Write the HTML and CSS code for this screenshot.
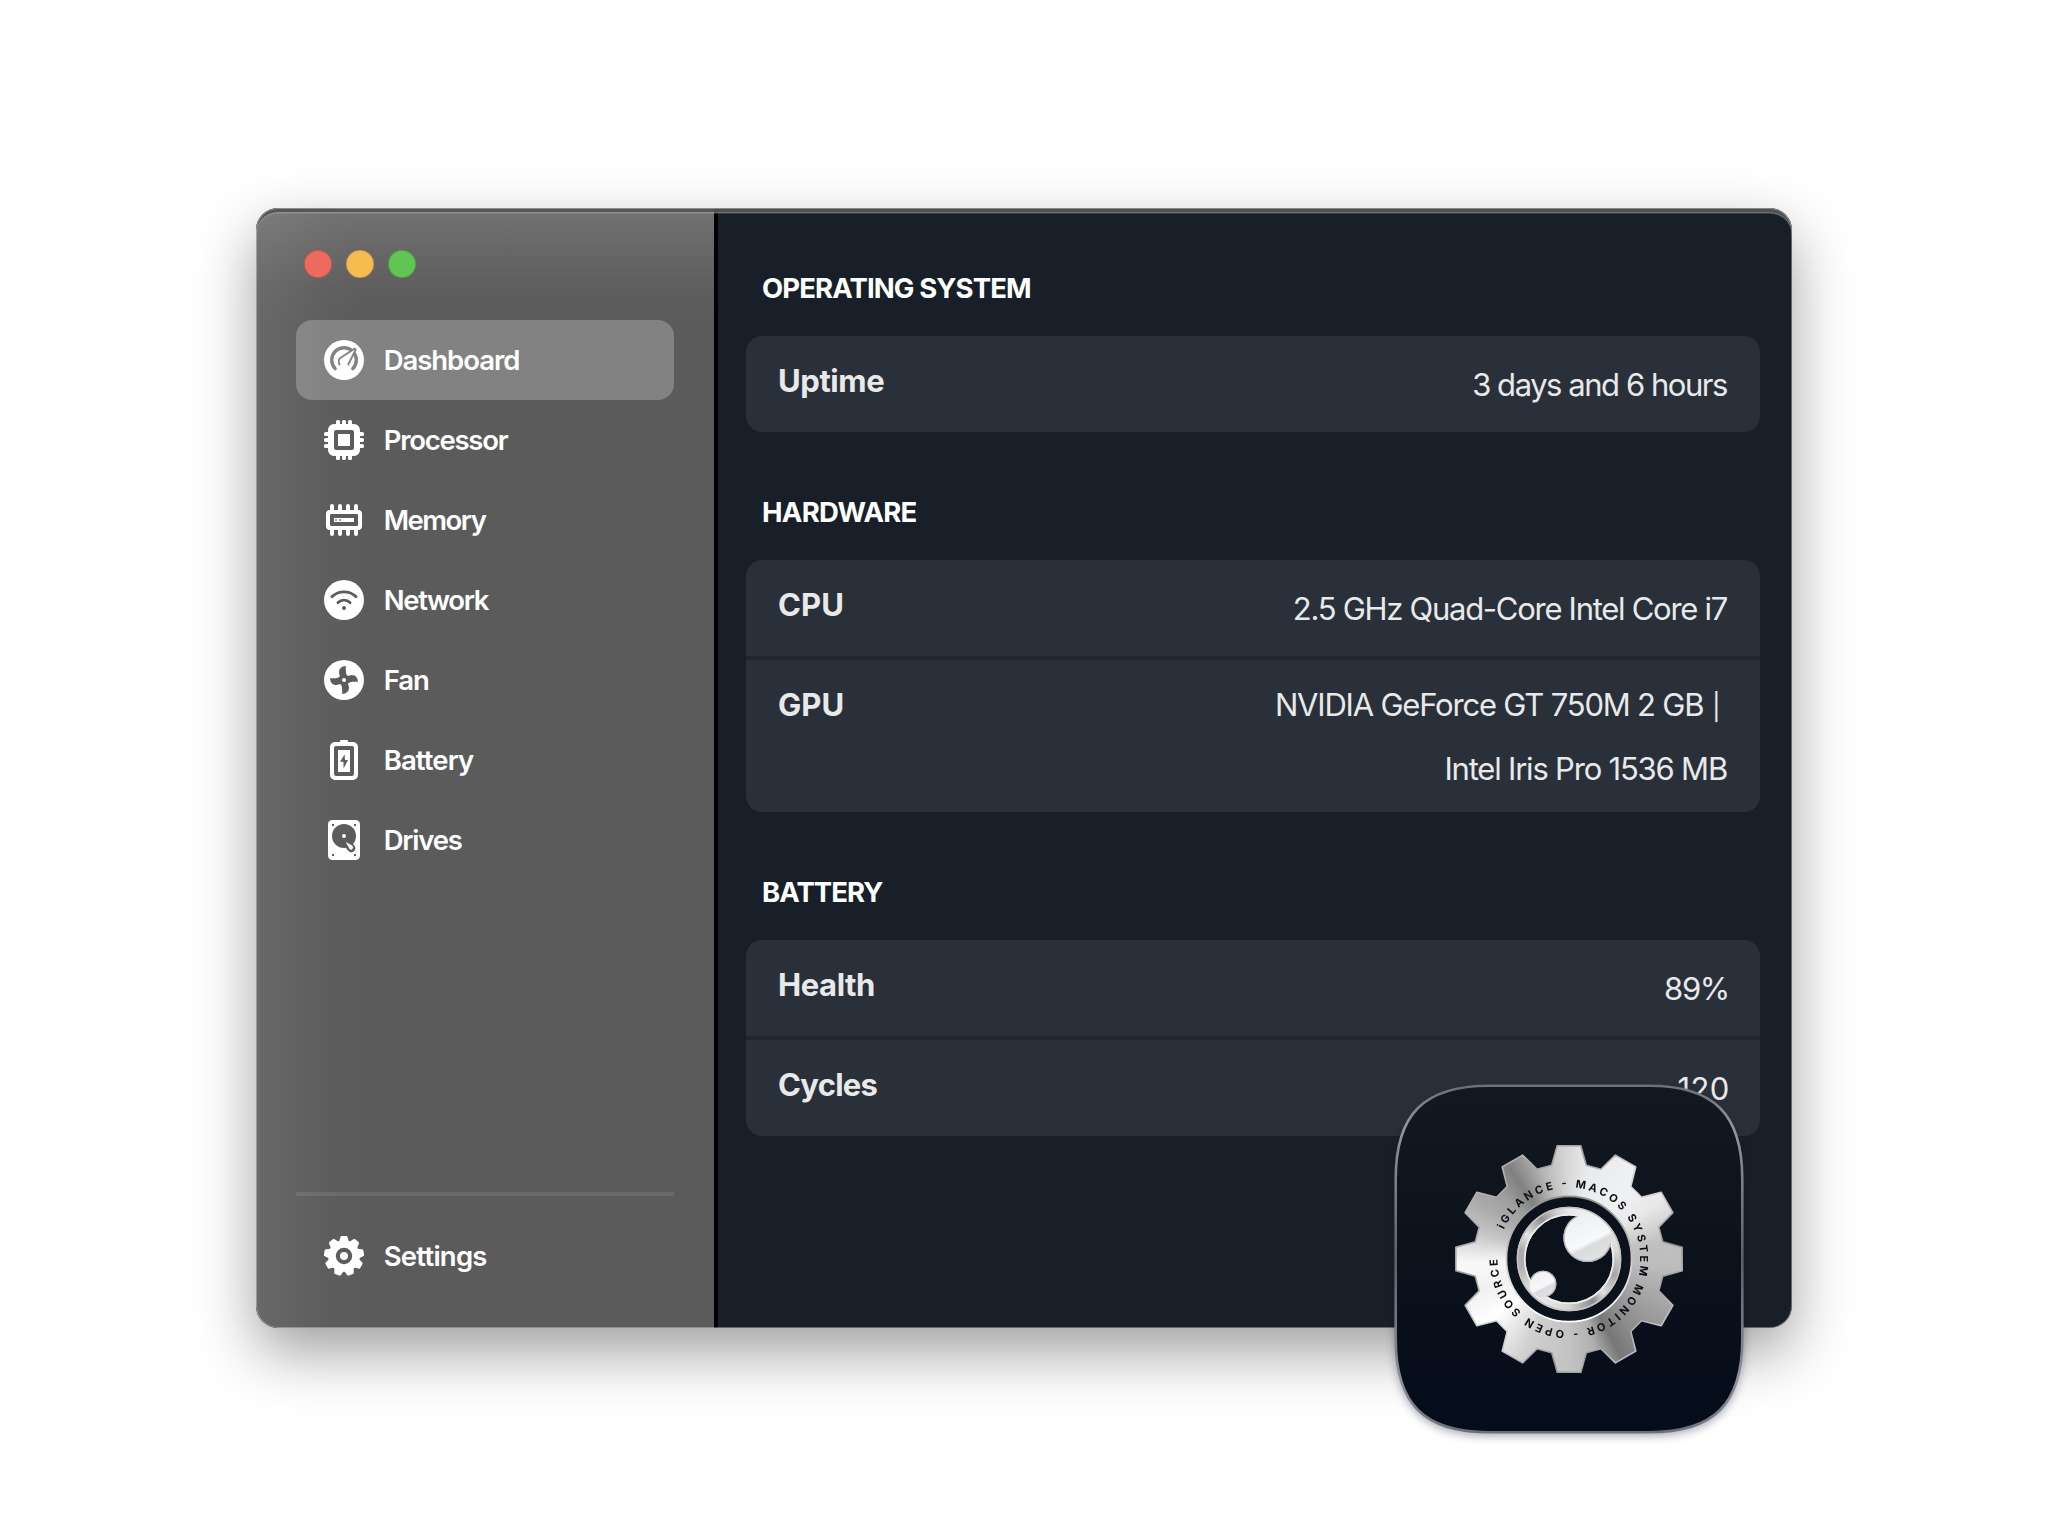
FILE: index.html
```html
<!DOCTYPE html>
<html lang="en">
<head>
<meta charset="utf-8">
<title>iGlance</title>
<link rel="stylesheet" href="styles.css">
</head>
<body>
<main class="stage">
  <div class="window">
    <aside class="sidebar">
      <div class="lights">
        <span class="light light-close"></span>
        <span class="light light-minimize"></span>
        <span class="light light-zoom"></span>
      </div>
      <nav class="nav">
        <a class="nav-item nav-item-active">
          <svg class="icon" viewBox="0 0 20 20">
            <mask id="m-dash">
              <circle cx="10" cy="10" r="10" fill="#fff"/>
              <path d="M5.600 14.300A6.150 6.150 0 1 1 14.400 14.300" fill="none" stroke="#000" stroke-width="1.700" stroke-linecap="round"/>
              <path d="M15.300 4.900L12 11.400A2.150 2.150 0 1 1 8.200 9.500Z" fill="#000" stroke="#000" stroke-width="1.900" stroke-linejoin="round"/>
              <path d="M15.300 4.900L12 11.400A2.150 2.150 0 1 1 8.200 9.500Z" fill="#fff"/>
              <path d="M8.300 12h3.400l1.500 4H6.800z" fill="#fff"/>
            </mask>
            <rect width="20" height="20" fill="#fff" mask="url(#m-dash)"/>
          </svg>
          <span class="nav-label label-dashboard">Dashboard</span>
        </a>
        <a class="nav-item">
          <svg class="icon" viewBox="0 0 20 20" fill="#fff">
            <path fill-rule="evenodd" d="M5 2h10a3 3 0 0 1 3 3v10a3 3 0 0 1-3 3H5a3 3 0 0 1-3-3V5a3 3 0 0 1 3-3zM6 5a1 1 0 0 0-1 1v8a1 1 0 0 0 1 1h8a1 1 0 0 0 1-1V6a1 1 0 0 0-1-1z"/>
            <rect x="7" y="7" width="6" height="6"/>
            <g>
              <rect x="6" y="0" width="2" height="20" rx=".8" clip-path="url(#pins-v)"/>
              <rect x="9" y="0" width="2" height="20" rx=".8" clip-path="url(#pins-v)"/>
              <rect x="12" y="0" width="2" height="20" rx=".8" clip-path="url(#pins-v)"/>
              <rect x="0" y="6" width="20" height="2" rx=".8" clip-path="url(#pins-h)"/>
              <rect x="0" y="9" width="20" height="2" rx=".8" clip-path="url(#pins-h)"/>
              <rect x="0" y="12" width="20" height="2" rx=".8" clip-path="url(#pins-h)"/>
            </g>
            <clipPath id="pins-v"><path d="M0 0h20v3H0zM0 17h20v3H0z"/></clipPath>
            <clipPath id="pins-h"><path d="M0 0h3v20H0zM17 0h3v20h-3z"/></clipPath>
          </svg>
          <span class="nav-label label-processor">Processor</span>
        </a>
        <a class="nav-item">
          <svg class="icon" viewBox="0 0 20 20" fill="#fff">
            <path fill-rule="evenodd" d="M3 5h14a2 2 0 0 1 2 2v6a2 2 0 0 1-2 2H3a2 2 0 0 1-2-2V7a2 2 0 0 1 2-2zM3.600 7a.6.6 0 0 0-.6.6v4.800a.6.6 0 0 0 .6.6h12.800a.6.6 0 0 0 .6-.6V7.600a.6.6 0 0 0-.6-.6z"/>
            <path fill-rule="evenodd" d="M5 9h10v2H5zM5.600 9.600v.8h.8v-.8zM7.600 9.600v.8h.8v-.8z"/>
            <path d="M4 3v3M8 3v3M12 3v3M16 3v3M4 14v3M8 14v3M12 14v3M16 14v3" stroke="#fff" stroke-width="2" stroke-linecap="round"/>
          </svg>
          <span class="nav-label label-memory">Memory</span>
        </a>
        <a class="nav-item">
          <svg class="icon" viewBox="0 0 20 20">
            <mask id="m-net">
              <circle cx="10" cy="10" r="10" fill="#fff"/>
              <path d="M4 8.300A8.800 8.800 0 0 1 16 8.300M7 11.300A4.200 4.200 0 0 1 13 11.300" fill="none" stroke="#000" stroke-width="1.450" stroke-linecap="round"/>
              <circle cx="10" cy="14" r="1" fill="#000"/>
            </mask>
            <rect width="20" height="20" fill="#fff" mask="url(#m-net)"/>
          </svg>
          <span class="nav-label label-network">Network</span>
        </a>
        <a class="nav-item">
          <svg class="icon" viewBox="0 0 20 20">
            <mask id="m-fan">
              <circle cx="10" cy="10" r="10" fill="#fff"/>
              <g fill="#000">
                <path id="blade" d="M10.900 3C8.900 3.100 7.500 4.200 7.500 6.200C7.500 7.800 8.600 8.900 10 10.400L12 9.500C11 7.400 10.800 5.500 10.900 3z"/>
                <use href="#blade" transform="rotate(90 10 10)"/>
                <use href="#blade" transform="rotate(180 10 10)"/>
                <use href="#blade" transform="rotate(270 10 10)"/>
                <circle cx="10" cy="10" r="2.900"/>
              </g>
              <circle cx="10" cy="10" r="1" fill="#fff"/>
            </mask>
            <rect width="20" height="20" fill="#fff" mask="url(#m-fan)"/>
          </svg>
          <span class="nav-label label-fan">Fan</span>
        </a>
        <a class="nav-item">
          <svg class="icon" viewBox="0 0 20 20" fill="#fff">
            <path fill-rule="evenodd" d="M8.600 0h2.800a.6.6 0 0 1 .6.6V1h2.500A2.500 2.500 0 0 1 17 3.500v14a2.500 2.500 0 0 1-2.500 2.500h-9A2.500 2.500 0 0 1 3 17.500v-14A2.500 2.500 0 0 1 5.500 1H8V.6a.6.6 0 0 1 .6-.6zM6 3a1 1 0 0 0-1 1v13a1 1 0 0 0 1 1h8a1 1 0 0 0 1-1V4a1 1 0 0 0-1-1z"/>
            <path fill-rule="evenodd" d="M7 5h6v11H7zM10.300 7.200L8 10.900h1.700l.1 3.300L12 10h-1.500z"/>
          </svg>
          <span class="nav-label label-battery">Battery</span>
        </a>
        <a class="nav-item">
          <svg class="icon" viewBox="0 0 20 20">
            <mask id="m-drive">
              <rect x="2" width="16" height="20" rx="2.200" fill="#fff"/>
              <circle cx="10" cy="8" r="6" fill="#000"/>
              <path d="M12 12L13.600 14.100" stroke="#000" stroke-width="4" stroke-linecap="round"/>
              <circle cx="10" cy="8" r="1" fill="#fff"/>
              <path d="M11.200 11.300L14 12.900A.95.95 0 0 1 12.900 14.500z" fill="#fff" stroke="#fff" stroke-width=".3" stroke-linejoin="round"/>
              <path d="M4 2h1v1H4zM15 2h1v1h-1zM4 17h1v1H4zM15 17h1v1h-1z" fill="#000"/>
            </mask>
            <rect width="20" height="20" fill="#fff" mask="url(#m-drive)"/>
          </svg>
          <span class="nav-label label-drives">Drives</span>
        </a>
      </nav>
      <div class="sidebar-footer">
        <a class="nav-item">
          <svg class="icon" viewBox="0 0 20 20">
            <mask id="m-gear">
              <g fill="#fff">
                <circle cx="10" cy="10" r="7.900"/>
                <path id="cog" d="M7.500 3L8.200.6Q8.300 0 8.900 0h2.200Q11.700 0 11.800.6L12.500 3z"/>
                <use href="#cog" transform="rotate(40 10 10)"/>
                <use href="#cog" transform="rotate(80 10 10)"/>
                <use href="#cog" transform="rotate(120 10 10)"/>
                <use href="#cog" transform="rotate(160 10 10)"/>
                <use href="#cog" transform="rotate(200 10 10)"/>
                <use href="#cog" transform="rotate(240 10 10)"/>
                <use href="#cog" transform="rotate(280 10 10)"/>
                <use href="#cog" transform="rotate(320 10 10)"/>
              </g>
              <circle cx="10" cy="10" r="3.050" fill="none" stroke="#000" stroke-width="2.100"/>
            </mask>
            <rect width="20" height="20" fill="#fff" mask="url(#m-gear)"/>
          </svg>
          <span class="nav-label label-settings">Settings</span>
        </a>
      </div>
    </aside>
    <section class="content">
      <h2 class="heading heading-os">OPERATING SYSTEM</h2>
      <div class="card">
        <div class="row"><span class="label">Uptime</span><span class="value value-uptime">3 days and 6 hours</span></div>
      </div>
      <h2 class="heading">HARDWARE</h2>
      <div class="card">
        <div class="row"><span class="label label-wide">CPU</span><span class="value">2.5 GHz Quad-Core Intel Core i7</span></div>
        <div class="row"><span class="label label-wide">GPU</span><span class="value value-multi">NVIDIA GeForce GT 750M 2 GB <span class="bar">|</span>&nbsp;<br>Intel Iris Pro 1536 MB</span></div>
      </div>
      <h2 class="heading heading-battery">BATTERY</h2>
      <div class="card">
        <div class="row"><span class="label">Health</span><span class="value value-percent">89%</span></div>
        <div class="row"><span class="label label-tight">Cycles</span><span class="value value-count">120</span></div>
      </div>
    </section>
  </div>

  <svg class="app-icon" viewBox="-180 -180 360 360">
    <defs>
      <linearGradient id="body" x1="0" y1="0" x2="0" y2="1">
        <stop offset="0" stop-color="#121920"/><stop offset=".5" stop-color="#0b121c"/><stop offset="1" stop-color="#050c1a"/>
      </linearGradient>
      <linearGradient id="rim" x1="0" y1="0" x2="0" y2="1">
        <stop offset="0" stop-color="#6c6f74"/><stop offset=".12" stop-color="#939599"/><stop offset=".5" stop-color="#5d6068"/><stop offset=".85" stop-color="#8d8f98"/><stop offset="1" stop-color="#6d6f7c"/>
      </linearGradient>
      <linearGradient id="edge" x1="0" y1="0" x2="1" y2="1">
        <stop offset="0" stop-color="#d2d2d2"/><stop offset=".3" stop-color="#9a9a9a"/><stop offset=".5" stop-color="#dedede"/><stop offset=".7" stop-color="#8f8f8f"/><stop offset="1" stop-color="#f6f6f6"/>
      </linearGradient>
      <linearGradient id="edge-inner" x1="0" y1="0" x2="0" y2="1">
        <stop offset="0" stop-color="#8f8f8f"/><stop offset=".5" stop-color="#c9c9c9"/><stop offset="1" stop-color="#fff"/>
      </linearGradient>
      <linearGradient id="bubble" x1=".25" y1="0" x2=".75" y2="1">
        <stop offset="0" stop-color="#eeeff1"/><stop offset=".58" stop-color="#f7f8f9"/><stop offset=".66" stop-color="#dadbdc"/><stop offset="1" stop-color="#e3e3e4"/>
      </linearGradient>
      <path id="teeth" d="M-17.300-93.700L-11.800-113.200L11.800-113.200L17.300-93.700L31.900-89.800L46.400-103.900L66.800-92.100L61.800-72.500L72.500-61.800L92.100-66.800L103.900-46.400L89.800-31.900L93.700-17.300L113.200-11.800L113.200 11.800L93.700 17.300L89.800 31.900L103.900 46.400L92.100 66.800L72.500 61.800L61.800 72.500L66.800 92.100L46.400 103.900L31.900 89.800L17.300 93.700L11.800 113.200L-11.800 113.200L-17.300 93.700L-31.900 89.800L-46.400 103.900L-66.800 92.100L-61.800 72.500L-72.500 61.800L-92.100 66.800L-103.900 46.400L-89.800 31.900L-93.700 17.300L-113.200 11.800L-113.200-11.800L-93.700-17.300L-89.800-31.900L-103.900-46.400L-92.100-66.800L-72.500-61.800L-61.800-72.500L-66.800-92.100L-46.400-103.900L-31.900-89.800Z"/>
      <clipPath id="gear-clip"><use href="#teeth"/></clipPath>
      <clipPath id="ring-clip">
        <path clip-rule="evenodd" d="M-52.300 0A52.300 52.300 0 1 0 52.300 0A52.300 52.300 0 1 0-52.300 0ZM-43.500 0A43.500 43.500 0 1 0 43.500 0A43.500 43.500 0 1 0-43.500 0Z"/>
      </clipPath>
      <clipPath id="lens"><circle r="50.700"/></clipPath>
      <path id="orbit" d="M-65.100-29.600A71.500 71.500 0 1 1-71.500 0A71.500 71.500 0 0 1-65.100-29.600"/>
    </defs>
    <path fill="url(#body)" stroke="url(#rim)" stroke-width="2.600" d="M-80-173.300H80C145-173.300 173.300-145 173.300-80V80C173.300 145 145 173.300 80 173.300H-80C-145 173.300-173.300 145-173.300 80V-80C-173.300-145-145-173.300-80-173.300Z"/>
    <g clip-path="url(#gear-clip)">
      <foreignObject x="-115" y="-115" width="230" height="230"><div class="metal metal-gear"></div></foreignObject>
    </g>
    <use href="#teeth" fill="none" stroke="url(#edge)" stroke-width="1.600" stroke-linejoin="round"/>
    <circle r="62.600" fill="#0b121c" stroke="url(#edge-inner)" stroke-width="1.800"/>
    <g clip-path="url(#ring-clip)">
      <foreignObject x="-55" y="-55" width="110" height="110"><div class="metal metal-ring"></div></foreignObject>
    </g>
    <circle r="51.500" fill="none" stroke="#c4c4c4" stroke-width="1.600"/>
    <circle r="44.300" fill="none" stroke="#ededed" stroke-width="1.600"/>
    <g clip-path="url(#lens)" fill="url(#bubble)">
      <circle cx="18.700" cy="-21.300" r="24.300"/>
      <circle cx="-26" cy="25" r="13.300"/>
    </g>
    <g fill="none" stroke="#b4b4b4" stroke-width="1.200" stroke-linecap="round">
      <path d="M8 -42.600A23.700 23.700 0 1 0 41.500 -15.100"/>
      <path d="M-37.800 20.600A12.700 12.700 0 1 1 -22.400 37.200"/>
    </g>
    <text class="orbit-text"><textPath href="#orbit" textLength="418" lengthAdjust="spacing">iGLANCE - MACOS SYSTEM MONITOR - OPEN SOURCE</textPath></text>
  </svg>
</main>
</body>
</html>
```
FILE: styles.css
```css
* { box-sizing: border-box; }

body {
  margin: 0;
  background: #fff;
  font-family: Inter, "Liberation Sans", sans-serif;
}

.stage {
  position: relative;
  width: 2048px;
  height: 1536px;
  padding: 208px 256px;
  overflow: hidden;
}

.stage::before {
  content: "";
  position: absolute;
  inset: 208px 256px;
  border-radius: 22px;
  box-shadow: 0 24px 60px rgba(0, 0, 0, .38);
}

.window {
  position: relative;
  display: flex;
  width: 1536px;
  height: 1120px;
  border-radius: 22px;
  overflow: hidden;
  background: #181f28;
}

.window::after {
  content: "";
  position: absolute;
  inset: 0;
  border-radius: 22px;
  pointer-events: none;
  box-shadow:
    inset 0 0 0 1px rgba(255, 255, 255, .33),
    inset 0 4px 0 rgba(74, 74, 74, .85),
    inset 0 5px 0 rgba(165, 165, 165, .5),
    inset 0 6px 0 rgba(165, 165, 165, .25);
}

/* Sidebar */
.sidebar {
  display: flex;
  flex-direction: column;
  width: 462px;
  padding: 42px 40px 32px;
  border-right: 4px solid #000;
  background:
    linear-gradient(180deg, rgba(255, 255, 255, .14), rgba(255, 255, 255, .08) 40px, rgba(255, 255, 255, .02) 80px, rgba(255, 255, 255, 0) 120px),
    linear-gradient(90deg, rgba(255, 255, 255, .08), rgba(255, 255, 255, .055) 30px, rgba(255, 255, 255, .015) 70px, rgba(255, 255, 255, 0) 110px),
    #5b5b5b;
}

.lights {
  display: flex;
  gap: 14px;
  padding-left: 8px;
}

.light {
  width: 28px;
  height: 28px;
  border-radius: 50%;
  border: 1.5px solid rgba(0, 0, 0, .17);
}

.light-close { background-color: #ed6a5e; }
.light-minimize { background-color: #f5bd4f; }
.light-zoom { background-color: #61c554; }

.nav { margin-top: 42px; }

.nav-item {
  display: flex;
  align-items: center;
  gap: 19.7px;
  height: 80px;
  padding-left: 28px;
  border-radius: 16px;
  color: #fff;
}

.nav-item-active { background: rgba(255, 255, 255, .24); }

.icon {
  display: block;
  flex: none;
  width: 40px;
  height: 40px;
}

.nav-label {
  font-size: 27.5px;
  font-weight: 600;
  line-height: 80px;
  white-space: nowrap;
}

.label-dashboard { letter-spacing: -1.05px; }
.label-processor { letter-spacing: -1.25px; }
.label-memory { letter-spacing: -1.5px; }
.label-network { letter-spacing: -1.35px; }
.label-fan { letter-spacing: -1px; }
.label-battery { letter-spacing: -.9px; }
.label-drives { letter-spacing: -1.2px; }
.label-settings { letter-spacing: -.75px; }

.sidebar-footer {
  margin-top: auto;
  padding-top: 20px;
  border-top: 4px solid rgba(255, 255, 255, .09);
}

/* Content */
.content {
  flex: 1;
  padding: 32px 32px 0 28px;
}

.heading {
  margin: 32px 0 0;
  padding-left: 16px;
  font-size: 27.5px;
  font-weight: 700;
  line-height: 96px;
  letter-spacing: -.7px;
  color: #fff;
}

.heading-os {
  margin-top: 0;
  letter-spacing: -.88px;
}

.heading-battery { letter-spacing: -.95px; }

.card {
  border-radius: 16px;
  background: #2a3039;
  color: #e8e9ea;
}

.row {
  display: flex;
  justify-content: space-between;
  min-height: 96px;
  padding: 13px 32px 11px;
  font-size: 31px;
  line-height: 64px;
}

.row + .row {
  min-height: 100px;
  border-top: 4px solid #22272c;
}

/* The divider eats into the row's top padding on the two-line row only in height, not in text position */
.label {
  font-weight: 700;
  letter-spacing: -.42px;
}

.label-wide { letter-spacing: .1px; }
.label-tight { letter-spacing: -.75px; }

.value {
  margin: 4px 1px 0 0;
  letter-spacing: -1.28px;
  text-align: right;
  white-space: nowrap;
}

.value-uptime { letter-spacing: -1.45px; }

.value-multi {
  margin-top: 0;
  letter-spacing: -1.2px;
}

.bar {
  margin-left: 1.2px;
  font-size: 26px;
  line-height: 1;
}

.value-percent {
  margin-right: -1px;
  letter-spacing: -1.3px;
}

.value-count {
  margin-right: -1.5px;
  letter-spacing: .3px;
}

/* App icon floating over the window corner */
.app-icon {
  position: absolute;
  left: 1388.8px;
  top: 1078.5px;
  width: 360px;
  height: 360px;
  overflow: visible;
  filter: drop-shadow(0 3px 4px rgba(10, 14, 40, .32));
}

.metal { width: 100%; height: 100%; }

.metal-gear {
  background: conic-gradient(#d9d9da 0deg, #e9eaec 12deg, #f0f1f3 40deg, #e8e8e8 58deg, #c0c0c0 80deg, #bcbcbc 95deg, #a0a0a0 120deg, #8a8a8a 140deg, #777 152deg, #b0b0b0 164deg, #c3c3c3 180deg, #cfcfcf 205deg, #fff 232deg, #f1f1f1 250deg, #f8f8f8 268deg, #c9c9c9 285deg, #aaa 302deg, #9d9d9d 315deg, #808080 327deg, #b5b5b5 343deg, #d9d9da 360deg);
}

.metal-ring {
  background: conic-gradient(#e8e8e8 0deg, #f4f4f4 40deg, #d8d8d8 80deg, #a5a5a5 110deg, #e0e0e0 135deg, #8a8a8a 150deg, #d5d5d5 180deg, #eee 225deg, #b0b0b0 260deg, #aaa 280deg, #e5e5e5 300deg, #909090 325deg, #d0d0d0 345deg, #e8e8e8 360deg);
}

.orbit-text {
  font-size: 11px;
  font-weight: 700;
  fill: #0a0f16;
}
```
